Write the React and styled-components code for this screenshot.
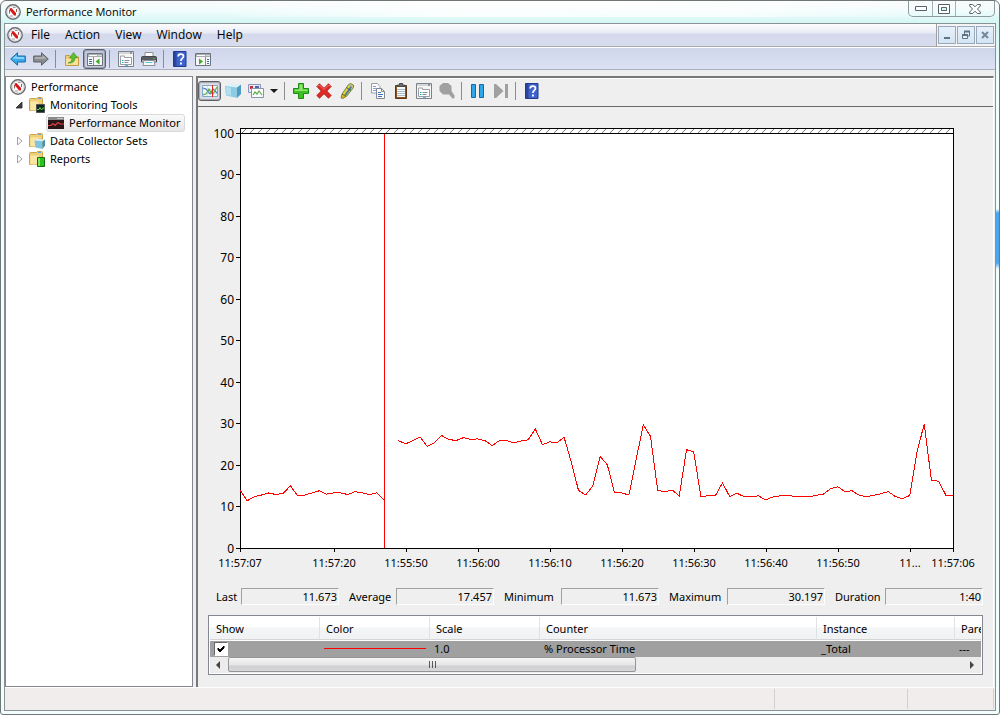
import React from 'react';
import styled, { createGlobalStyle, css } from 'styled-components';

const GlobalStyle = createGlobalStyle`
  * {
    box-sizing: border-box;
  }

  body {
    margin: 0;
    color: #000;
    font: 11px/16px 'Noto Sans', 'Open Sans', sans-serif;
  }

  button, input {
    margin: 0;
    padding: 0;
    border: 0;
    background: none;
    color: inherit;
    font: inherit;
  }
`;

/* Window frame */

const Window = styled.div`
  display: flex;
  flex-flow: column;
  min-height: 100vh;
  padding: 0 3px 3px;
  border: 1px solid #6f7677;
  border-radius: 6px 6px 3px 3px;
  background:
    linear-gradient(to bottom, transparent 208px, #4ba6ee 212px, #4ba6ee 262px, transparent 268px) right top / 3px 100% no-repeat,
    linear-gradient(to right, transparent 20%, rgba(255, 255, 255, 0.8) 45%, rgba(255, 255, 255, 0.6) 75%, transparent 95%) left top / 100% 16px no-repeat,
    linear-gradient(to bottom, #fbfbfb, #f0fcfc 10px, #d3f6f4 22px, #f2fdfd 80px, #f2fdfd);
`;

const TitleBar = styled.header`
  display: flex;
  flex: 0 0 22px;
  align-items: center;
  gap: 5px;
  padding: 0 1px;
`;

const Title = styled.h1`
  margin: 0;
  font-family: 'Open Sans', sans-serif;
  font-size: 11px;
  font-weight: 400;
`;

const FrameButtons = styled.div`
  display: flex;
  align-self: flex-start;
  height: 16px;
  margin-left: auto;
  border: 1px solid #8e9c9f;
  border-top: 0;
  border-radius: 0 0 5px 5px;
`;

const FrameButton = styled.button`
  display: flex;
  align-items: center;
  justify-content: center;
  width: ${({ $wide }) => ($wide ? 39 : 23)}px;

  & + & {
    border-left: 1px solid #a5b3b6;
  }
`;

const Client = styled.div`
  display: flex;
  flex: 1;
  flex-flow: column;
  border: 1px solid #8b9296;
  background: #efefef;
`;

const MenuBar = styled.nav`
  display: flex;
  flex: 0 0 23px;
  align-items: center;
  padding-left: 2px;
  border-bottom: 1px solid #a9abb3;
  background: linear-gradient(to bottom, #fdfdfe, #e8ebf5 9px, #d3d9ec 10px, #d8ddee);
`;

const MenuItem = styled.button`
  padding: 0 7px 0 8px;
  font-family: 'Open Sans', sans-serif;
  font-size: 12px;
`;

const DocumentButtons = styled.div`
  display: flex;
  align-self: stretch;
  align-items: center;
  gap: 1px;
  margin-left: auto;
  padding: 0 1px;
  border-left: 1px solid #a0a0a0;
  background: #f4f4f6;
`;

const DocumentButton = styled.button`
  display: flex;
  align-items: center;
  justify-content: center;
  width: 18px;
  height: 18px;
  border: 1px solid #97a9bb;
  background: linear-gradient(to bottom, #e6f1fb, #d5e4f3);
`;

/* Toolbars */

const Toolbar = styled.div`
  display: flex;
  align-items: center;
`;

const MainToolbar = styled(Toolbar)`
  flex: 0 0 23px;
  padding-left: 1px;
  border-top: 1px solid #fff;
  border-bottom: 1px solid #aab0c0;
  background: linear-gradient(to bottom, #cfd5ea, #dce2f4);
`;

const ChartToolbar = styled(Toolbar)`
  height: 29px;
  padding-bottom: 3px;
  border-top: 1px solid #fff;
  border-bottom: 1px solid #696969;
`;

const ToolButton = styled.button`
  display: flex;
  align-items: center;
  justify-content: center;
  width: ${({ $narrow }) => ($narrow ? 14 : 23)}px;
  height: 20px;

  ${({ $pressed }) =>
    $pressed &&
    css`
      border: 1px solid #5c5f68;
      border-radius: 3px;
      background: rgba(140, 145, 160, 0.18);
      box-shadow: inset 0 0 1px 1px rgba(90, 95, 110, 0.45);
    `}
`;

const Separator = styled.span`
  width: 8px;
  height: 18px;
  background: linear-gradient(#8b8b90, #8b8b90) 3px 0 / 1px 100% no-repeat;
`;

/* Panels */

const Body = styled.main`
  display: grid;
  flex: 1;
  grid-template-columns: 188px minmax(0, 1fr);
  gap: 3px;
  padding: 6px 1px 0 0;
`;

const TreePanel = styled.aside`
  padding-top: 1px;
  border: 1px solid #828790;
  background: #fff;
`;

const TreeList = styled.ul`
  margin: 0;
  padding: 0;
  list-style: none;
`;

const TreeRow = styled.li`
  display: flex;
  align-items: center;
  height: 18px;
  padding-left: ${({ $level }) => [4, 9, 40][$level]}px;
`;

const TreeToggle = styled.button`
  display: flex;
  align-items: center;
  justify-content: center;
  width: 8px;
  height: 16px;
  margin-right: 6px;
`;

const TreeLabel = styled.span`
  display: flex;
  align-items: center;
  gap: 5px;
  height: 18px;
  white-space: nowrap;

  ${({ $selected }) =>
    $selected &&
    css`
      padding: 0 4px 0 1px;
      border: 1px solid #d9d9d9;
      border-radius: 3px;
      background: linear-gradient(to bottom, #fafafa, #e6e6e6);
    `}
`;

const MonitorPanel = styled.section`
  display: flex;
  flex-flow: column;
  border-top: 2px solid #787878;
  border-left: 2px solid #787878;
  border-right: 1px solid #fff;
`;

const ChartDrawing = styled.svg`
  display: block;
  width: 100%;
  height: auto;
`;

const Stats = styled.div`
  display: grid;
  grid-template-columns: 35px 1fr 57px 1fr 67px 1fr 68px 1fr 60px 1fr;
  align-items: center;
  padding: 7px 10px 10px 8px;
`;

const StatLabel = styled.label`
  padding-left: 10px;
`;

const StatValue = styled.input`
  width: 100%;
  min-width: 0;
  height: 17px;
  padding-right: 1px;
  border: 1px solid #fff;
  border-top-color: #a0a0a0;
  border-left-color: #a0a0a0;
  text-align: right;
`;

const Legend = styled.div`
  margin: 0 10px 11px;
  padding: 1px;
  overflow: hidden;
  border: 1px solid #828790;
  background: #fff;
`;

const LegendTable = styled.table`
  width: 100%;
  table-layout: fixed;
  border-collapse: separate;
  border-spacing: 0;
`;

const HeadCell = styled.th`
  width: ${({ $width }) => ($width ? `${$width}px` : 'auto')};
  height: 23px;
  padding: 2px 0 0 6px;
  overflow: hidden;
  border-right: 1px solid #e0e3e6;
  border-bottom: 1px solid #d5d5d5;
  background: linear-gradient(to bottom, #fff 10px, #f4f5f7 11px, #f1f2f4);
  font-weight: 400;
  text-align: left;
  white-space: nowrap;

  &:last-child {
    border-right: 0;
  }
`;

const Cell = styled.td`
  height: 17px;
  padding: 0 4px;
  overflow: hidden;
  border-top: 1px solid #fff;
  background: #a0a0a0;
  white-space: nowrap;
`;

const Swatch = styled.span`
  display: block;
  height: 1px;
  margin-bottom: 1px;
  background: #f00;
`;

const ShowCheck = styled.input`
  display: block;
  width: 14px;
  height: 14px;
  appearance: none;
  border: 1px solid #fff;
  border-top-color: #696969;
  border-left-color: #696969;
  background: #fff;

  &:checked {
    background: #fff url("data:image/svg+xml,%3Csvg xmlns='http://www.w3.org/2000/svg' width='12' height='12'%3E%3Cpath d='M3 5l2 2 4-4v2L5 9 3 7z' fill='%23000' stroke='%23000'/%3E%3C/svg%3E") center no-repeat;
  }
`;

const ScrollBar = styled.div`
  display: flex;
  height: 16px;
  background: #ececec;
`;

const ScrollArrow = styled.button`
  display: flex;
  align-items: center;
  justify-content: center;
  width: 18px;
`;

const ScrollTrack = styled.div`
  flex: 1;
`;

const ScrollThumb = styled.button`
  display: flex;
  align-items: center;
  justify-content: center;
  gap: 2px;
  width: calc(100% * 5 / 9);
  height: 15px;
  border: 1px solid #959595;
  border-radius: 2px;
  background: linear-gradient(to bottom, #f5f5f5, #e6e6e8 7px, #cfcfd2 8px, #d8d8da);
`;

const Grip = styled.span`
  width: 1px;
  height: 7px;
  background: #5a5a5a;
`;

const StatusBar = styled.footer`
  display: flex;
  flex: 0 0 23px;
  justify-content: flex-end;
  padding: 1px 1px 1px 0;
  border-top: 1px solid #fff;
  background: #f1edec;
`;

const StatusCell = styled.div`
  width: ${({ $width }) => $width}px;
  border-left: 1px solid #d4d0cf;

  &:last-child {
    border-right: 1px solid #d4d0cf;
  }
`;

/* Icons */

const IconSvg = styled.svg`
  display: block;
  flex: none;
`;

const Icon = ({ size = 16, children }) => (
  <IconSvg width={size} height={size} viewBox={`0 0 ${size} ${size}`} aria-hidden='true'>
    {children}
  </IconSvg>
);

const GaugeIcon = () => (
  <Icon>
    <circle cx='8' cy='8' r='7.2' fill='#fff' stroke='#6a6c6f' strokeWidth='1.4' />
    <circle cx='8' cy='8' r='5.8' fill='#fdfdfd' stroke='#cfd1d3' strokeWidth='0.8' />
    <path d='M4.500 9.500V6M11.500 8V5' stroke='#9a5a5a' strokeWidth='1' />
    <path d='M4.500 4.500L6.500 4l4.500 5v2.500H9L5 6.500z' fill='#d81818' />
    <path d='M5 12h3M8 3.500h2.500' stroke='#999' strokeWidth='1' />
  </Icon>
);

const BackIcon = () => (
  <Icon>
    <path d='M.7 8L7.5 1.8V5H15.3V11H7.5V14.2z' fill='#3ba9e8' stroke='#1a6aa8' />
    <path d='M2.4 7.8L6.6 4v2H14.2V8z' fill='#8ad4f8' />
  </Icon>
);

const ForwardIcon = () => (
  <Icon>
    <path d='M15.3 8L8.5 1.8V5H.7V11H8.5V14.2z' fill='#8a8d90' stroke='#5e6164' />
    <path d='M13.6 7.8L9.4 4v2H1.8V8z' fill='#aeb0b2' />
  </Icon>
);

const UpFolderIcon = () => (
  <Icon>
    <path d='M1.500 4.500h4l1.500 1.500h7.500v8.500H1.500z' fill='#edcb72' stroke='#c29a43' />
    <path d='M2 8h12v6H2z' fill='#f8e19b' />
    <path d='M4 12c3-.5 4-2.500 4-5H5.500L9.500 1.500l4 5H11c0 4-2.500 6-7 5.500z' fill='#5cc034' stroke='#3a8a20' strokeWidth='.6' />
  </Icon>
);

const PaneIcon = ({ right }) => (
  <Icon>
    <path d='M.5 2.500h15v12H.5z' fill='#f7f7f7' stroke='#70747a' />
    <path d='M1 3h14v3H1z' fill='#a9adb3' />
    <path d='M2 4.500h8M11.500 4.500h1M13.500 4.500h1' stroke='#fff' />
    <path d={right ? 'M10.500 6v8' : 'M6.500 6v8'} stroke='#8a8e94' />
    <path d={right ? 'M12 8.500h2M12 10.500h2M12 12.500h2' : 'M2 8.500h3M2 10.500h3M2 12.500h3'} stroke='#3a6ea8' />
    <path d={right ? 'M4 7.500v6l4-3z' : 'M12.500 7.500v6l-4-3z'} fill='#3faa28' />
  </Icon>
);

const PropertiesIcon = () => (
  <Icon>
    <path d='M.5.5h15v15H.5z' fill='#f6f6f4' stroke='#7e8288' />
    <path d='M1 1h14v2H1z' fill='#d4d7da' />
    <path d='M12 2h2' stroke='#555' />
    <path d='M2.500 6.500V5h4v1.500h7v7h-11z' fill='#fff' stroke='#9a9ea4' />
    <path d='M4 9.500h1.500M4 11.500h1.500' stroke='#26b3d8' />
    <path d='M6.500 9.500h5M6.500 11.500h4' stroke='#8b9096' />
    <path d='M7 14.500h3' stroke='#35cbe8' />
  </Icon>
);

const PrintIcon = () => (
  <Icon>
    <path d='M4 1.500h8V6H4z' fill='#fff' stroke='#8c9094' />
    <path d='M.500 6.500q0-1 1-1h13q1 0 1 1V11H.500z' fill='#595c60' stroke='#45484c' />
    <path d='M1 9h14v2H1z' fill='#a8abaf' />
    <path d='M12.500 7.500h1' stroke='#6fdc4a' />
    <path d='M3 9.500h10l1 5H2z' fill='#f8f8f8' stroke='#8c9094' />
    <path d='M4.500 11.500h7' stroke='#55c4de' />
  </Icon>
);

const HelpIcon = () => (
  <Icon>
    <path d='M1.500.5h12.500v15H1.500z' fill='#3f63cc' stroke='#22398c' />
    <path d='M2 1h2.500v14H2z' fill='#2a479f' />
    <path d='M6.200 5.500c0-3.300 5.300-3 5.300-.3C11.500 7.500 8.900 7.400 8.900 10' fill='none' stroke='#fff' strokeWidth='1.7' />
    <path d='M8 11.500h1.900v1.900H8z' fill='#fff' />
  </Icon>
);

const GraphIcon = () => (
  <Icon>
    <path d='M.5 2.500h15v11H.5z' fill='#f4faff' stroke='#7fa6cc' />
    <path d='M1 6.500h14M1 10.500h14M5.500 3v10' stroke='#d5e4f0' />
    <path d='M1 5l3 1 4 5 3-5 4 4' fill='none' stroke='#4a78c8' strokeWidth='1.200' />
    <path d='M1 12l3-1 3-5 2 4 2 1 4-7' fill='none' stroke='#59b23c' strokeWidth='1.200' />
    <path d='M10.500 2v12' stroke='#e3261b' />
  </Icon>
);

const CubeIcon = () => (
  <Icon>
    <path d='M0 3L4.500 1 16 1.500 12 4.500z' fill='#d9f2fa' />
    <path d='M0 3L12 4.500V15L1 12.500z' fill='#8ccbe2' />
    <path d='M12 4.500L16 1.500V11l-4 4z' fill='#4f9cbf' />
    <path d='M1 4l5 .700v8L1.500 12z' fill='#b3e0ef' />
  </Icon>
);

const ViewTypeIcon = () => (
  <Icon>
    <path d='M.5 1.500h12v8H.5z' fill='#e6ecf6' stroke='#8894b8' />
    <path d='M2 3h3v3H2z' fill='#c3293c' />
    <path d='M7 3h4v2H7z' fill='#5064b0' />
    <path d='M3.500 5.500h12v9h-12z' fill='#fafcff' stroke='#8894a8' />
    <path d='M5 12l2-3 2 2 2-3 3 4' fill='none' stroke='#5cae40' strokeWidth='1.200' />
  </Icon>
);

const DropIcon = () => (
  <Icon size={8}>
    <path d='M0 2h8L4 6z' fill='#1a1a1a' />
  </Icon>
);

const AddIcon = () => (
  <Icon>
    <path d='M5.500.5h5v5h5v5h-5v5h-5v-5h-5v-5h5z' fill='#3fbf24' stroke='#1d8a14' />
    <path d='M6.500 1.500h3v5h5v1.500h-13V6.500h5z' fill='#93e572' />
  </Icon>
);

const DeleteIcon = () => (
  <Icon>
    <path d='M.8 3.500L3.500.8 8 5.200 12.500.8l2.700 2.700L10.800 8l4.400 4.500-2.700 2.700L8 10.800l-4.500 4.400L.8 12.500 5.200 8z' fill='#dd2a26' stroke='#ad1613' strokeWidth='.8' />
    <path d='M2 3.500l1.500-1.500L8 6.500 12.500 2 14 3.500' fill='none' stroke='#f27a72' />
  </Icon>
);

const HighlightIcon = () => (
  <Icon>
    <path d='M9.500 1.500l2-1 3 1.500v2.500l-7 9L3 11z' fill='#e3cf3a' stroke='#5f6a50' strokeWidth='.8' />
    <path d='M12.500 3.500l-6.500 9' stroke='#4a7f9a' strokeWidth='2' />
    <path d='M10 1.500l3.500 2.500' stroke='#8db4c6' strokeWidth='1.500' />
    <path d='M3 11l4 2.500-3 2-2-.5z' fill='#d0b81c' stroke='#6a6318' strokeWidth='.7' />
    <path d='M7.500 4.500l4.500 3' stroke='#42586a' />
  </Icon>
);

const CopyIcon = () => (
  <Icon>
    <path d='M1.500.5h6l2.500 3V10H1.500z' fill='#fff' stroke='#9a9ea4' />
    <path d='M3 3.500h3M3 5.500h4M3 7.500h3' stroke='#7ba1d6' />
    <path d='M6.500 5.500h5l3 3v7h-8z' fill='#fff' stroke='#85898f' />
    <path d='M11.500 5.500v3h3' fill='none' stroke='#85898f' />
    <path d='M8 9.500h3M8 11.500h5M8 13.500h4' stroke='#3b74c4' />
  </Icon>
);

const ClipboardIcon = () => (
  <Icon>
    <path d='M2.500 2.500h11v13h-11z' fill='#8a5423' stroke='#60380f' />
    <path d='M4 4h8v10H4z' fill='#f6fafd' />
    <path d='M4 6.500h8M4 8.500h8M4 10.500h8M4 12.500h8' stroke='#a9bccc' />
    <path d='M4.500 3.500V2h2V.5h3V2h2v1.500z' fill='#6e7276' stroke='#44484c' />
  </Icon>
);

const ZoomIcon = () => (
  <Icon>
    <path d='M4 0h5l3.500 3v5L15.500 12.500v2L14 16l-4-4.500H4L.5 8V3z' fill='#a0a0a0' />
  </Icon>
);

const PauseIcon = () => (
  <Icon>
    <path d='M1.500 1.500h4v13h-4zM9.500 1.500h4v13h-4z' fill='#2fa5ea' stroke='#1469ac' />
  </Icon>
);

const StepIcon = () => (
  <Icon>
    <path d='M1 1h2l7.500 7L3 15H1zM12 1h3v14h-3z' fill='#a0a0a0' />
  </Icon>
);

const FolderIcon = ({ badge }) => (
  <Icon>
    <path d='M.5 2.500q0-1 1-1h6l1-1h4q1 0 1 1v12H.5z' fill='#efcf78' stroke='#cfa447' />
    <path d='M1.500 4.500h8v9h-8z' fill='#fbe6a4' />
    <path d='M9 1.500h3' stroke='#6aa7de' />
    {badge === 'tools' && (
      <>
        <path d='M7.500 7.500h8v8h-8z' fill='#12281c' stroke='#555' />
        <path d='M8 12.500h2l1-2 1.500 2.500 1.500-2h1.500' fill='none' stroke='#5bd24d' />
      </>
    )}
    {badge === 'sets' && (
      <>
        <path d='M5.500 7.500l3-1.500 7.500.500-2.500 2z' fill='#d2eef8' />
        <path d='M5.500 7.500l8 1v7.500l-7-1.500z' fill='#7fc3de' />
        <path d='M13.500 8.500L16 6.500v6L13.500 16z' fill='#478fb3' />
      </>
    )}
    {badge === 'reports' && (
      <>
        <path d='M8.500 6.500h7v9h-7z' fill='#2fc01f' stroke='#136b0d' />
        <path d='M9 7h2v8H9z' fill='#7ce860' />
      </>
    )}
  </Icon>
);

const MonitorIcon = () => (
  <Icon>
    <path d='M0 2h16v12H0z' fill='#8b8b8b' />
    <path d='M0 5h16v9H0z' fill='#2a1618' />
    <path d='M9.500 3.500h1M11.500 3.500h1M13.500 3.500h1' stroke='#fff' />
    <path d='M0 10.500h3l2-2 2 2 3-3 2 1.500h4' fill='none' stroke='#e04040' strokeWidth='1.200' />
  </Icon>
);

const ExpanderIcon = ({ open }) => (
  <Icon size={8}>
    {open ? (
      <path d='M7 1v6H1z' fill='#404040' stroke='#262626' strokeWidth='.8' />
    ) : (
      <path d='M2.500 0v8l4.500-4z' fill='#fff' stroke='#a0a0a0' />
    )}
  </Icon>
);

const ArrowIcon = ({ right }) => (
  <Icon size={8}>
    <path d={right ? 'M2 0v8l4-4z' : 'M5 0v8L1 4z'} fill='#444' />
  </Icon>
);

/* Chart data, % processor time per sample; null marks the sweep position */

const SAMPLES = [
  14.1, 11.5, 12.5, 12.9, 13.4, 13, 13.3, 15.1, 12.7, 12.9,
  13.4, 13.9, 13.1, 13.4, 13.4, 13, 13.7, 13.4, 13, 13.4,
  11.7, null, 26, 25.2, 26, 26.9, 24.6, 25.5, 27.2, 26.3,
  26, 26.7, 26.3, 26.4, 26, 24.8, 26, 26, 25.5, 25.9,
  26.2, 28.8, 25, 25.7, 25.5, 26.8, 20.8, 14, 12.9, 15.1,
  22.2, 20.2, 13.4, 13.4, 12.9, 21.4, 29.8, 27, 14, 13.7,
  14.1, 12.7, 23.8, 23.3, 12.5, 12.7, 12.7, 15.8, 12.5, 13.3,
  12.5, 12.5, 12.7, 11.7, 12.4, 12.7, 12.9, 12.5, 12.5, 12.5,
  12.8, 13.1, 14.4, 14.9, 13.7, 13.9, 12.8, 12.5, 12.8, 13.2,
  13.7, 12.5, 12, 12.8, 23.2, 30, 16.5, 16.2, 12.9, 12.9
];

const TIMES = [
  [0, '11:57:07'],
  [94, '11:57:20'],
  [166, '11:55:50'],
  [238, '11:56:00'],
  [310, '11:56:10'],
  [382, '11:56:20'],
  [454, '11:56:30'],
  [526, '11:56:40'],
  [598, '11:56:50'],
  [670, '11...'],
  [713, '11:57:06']
];

const PLOT_WIDTH = 713;
const PLOT_HEIGHT = 415;

const sampleX = (i) => (i * PLOT_WIDTH) / (SAMPLES.length - 1);
const sampleY = (v) => PLOT_HEIGHT * (1 - v / 100) + 0.5;

const linePath = SAMPLES.map((v, i) => {
  if (v === null) return '';
  const command = i === 0 || SAMPLES[i - 1] === null ? 'M' : 'L';
  return `${command}${sampleX(i).toFixed(1)} ${sampleY(v).toFixed(1)}`;
}).join('');

const Chart = () => (
  <ChartDrawing viewBox='-42 -26 795 474' role='img' aria-label='% Processor Time'>
    <defs>
      <pattern id='hatch' width='8' height='4' patternUnits='userSpaceOnUse' y='-4'>
        <path d='M2 4l4-4' stroke='#555' strokeWidth='.8' />
      </pattern>
    </defs>
    <g shapeRendering='crispEdges' fill='none' stroke='#000'>
      <path d='M.5-4.500h713v420H.5z' fill='#fff' />
      <path d='M1-4h712v4H1z' fill='url(#hatch)' stroke='none' />
      <path d='M0 .5h714' />
      {[...Array(11).keys()].map((n) => (
        <path key={n} d={`M-4 ${Math.floor(n * 41.5) + 0.5}h4`} />
      ))}
      {TIMES.map(([x]) => (
        <path key={x} d={`M${x + 0.5} 416v3`} />
      ))}
      <path d='M144.500 1v414' stroke='#f00' />
      <path d={linePath} stroke='#f00' />
    </g>
    {[...Array(11).keys()].map((n) => (
      <text key={n} x='-6' y={Math.floor(n * 41.5) + 5} textAnchor='end' fontSize='12'>
        {100 - n * 10}
      </text>
    ))}
    {TIMES.map(([x, label]) => (
      <text key={x} x={x} y='434' textAnchor='middle'>
        {label}
      </text>
    ))}
  </ChartDrawing>
);

const STATS = [
  ['Last', '11.673'],
  ['Average', '17.457'],
  ['Minimum', '11.673'],
  ['Maximum', '30.197'],
  ['Duration', '1:40']
];

const Tool = ({ label, children, ...rest }) => (
  <ToolButton type='button' aria-label={label} {...rest}>
    {children}
  </ToolButton>
);

export default function App () {
  return (
    <>
      <GlobalStyle />
      <Window>
        <TitleBar>
          <GaugeIcon />
          <Title>Performance Monitor</Title>
          <FrameButtons>
            <FrameButton type='button' aria-label='Minimize'>
              <IconSvg width='12' height='5' viewBox='0 0 12 5'>
                <path d='M.5.5h11v4H.5z' fill='#fff' stroke='#5a6068' />
              </IconSvg>
            </FrameButton>
            <FrameButton type='button' aria-label='Maximize'>
              <IconSvg width='12' height='10' viewBox='0 0 12 10'>
                <path d='M.5.5h11v9H.5z' fill='#fff' stroke='#5a6068' />
                <path d='M3.500 3.500h5v3h-5z' fill='#cfe' stroke='#5a6068' />
              </IconSvg>
            </FrameButton>
            <FrameButton type='button' aria-label='Close' $wide>
              <IconSvg width='12' height='10' viewBox='0 0 12 10'>
                <path d='M.7.5h3L6 2.800 8.300.5h3v1.500L8.500 5l2.800 3v1.500h-3L6 7.200 3.700 9.500h-3V8L3.500 5 .7 2z' fill='#fff' stroke='#5a6068' />
              </IconSvg>
            </FrameButton>
          </FrameButtons>
        </TitleBar>
        <Client>
          <MenuBar>
            <GaugeIcon />
            {['File', 'Action', 'View', 'Window', 'Help'].map((item) => (
              <MenuItem type='button' key={item}>{item}</MenuItem>
            ))}
            <DocumentButtons>
              <DocumentButton type='button' aria-label='Minimize document'>
                <Icon size={10}>
                  <path d='M2 7h6v2H2z' fill='#5f7386' />
                </Icon>
              </DocumentButton>
              <DocumentButton type='button' aria-label='Restore document'>
                <Icon size={10}>
                  <path d='M3.500 4V1.500h5V6H7' fill='none' stroke='#5f7386' />
                  <path d='M3 1.500h6' stroke='#5f7386' strokeWidth='2' />
                  <path d='M1.500 4.500h5v4h-5z' fill='#e6f1fb' stroke='#5f7386' />
                  <path d='M1 5h6' stroke='#5f7386' strokeWidth='2' />
                </Icon>
              </DocumentButton>
              <DocumentButton type='button' aria-label='Close document'>
                <Icon size={10}>
                  <path d='M2 2l6 6M8 2L2 8' stroke='#74889b' strokeWidth='2' />
                </Icon>
              </DocumentButton>
            </DocumentButtons>
          </MenuBar>
          <MainToolbar>
            <Tool label='Back'><BackIcon /></Tool>
            <Tool label='Forward'><ForwardIcon /></Tool>
            <Separator />
            <Tool label='Up one level'><UpFolderIcon /></Tool>
            <Tool label='Show/Hide console tree' $pressed><PaneIcon /></Tool>
            <Separator />
            <Tool label='Properties'><PropertiesIcon /></Tool>
            <Tool label='Print'><PrintIcon /></Tool>
            <Separator />
            <Tool label='Help'><HelpIcon /></Tool>
            <Tool label='Show/Hide action pane'><PaneIcon right /></Tool>
          </MainToolbar>
          <Body>
            <TreePanel>
              <TreeList>
                <TreeRow $level={0}>
                  <TreeLabel><GaugeIcon />Performance</TreeLabel>
                </TreeRow>
                <TreeRow $level={1}>
                  <TreeToggle type='button' aria-label='Collapse'><ExpanderIcon open /></TreeToggle>
                  <TreeLabel><FolderIcon badge='tools' />Monitoring Tools</TreeLabel>
                </TreeRow>
                <TreeRow $level={2}>
                  <TreeLabel $selected><MonitorIcon />Performance Monitor</TreeLabel>
                </TreeRow>
                <TreeRow $level={1}>
                  <TreeToggle type='button' aria-label='Expand'><ExpanderIcon /></TreeToggle>
                  <TreeLabel><FolderIcon badge='sets' />Data Collector Sets</TreeLabel>
                </TreeRow>
                <TreeRow $level={1}>
                  <TreeToggle type='button' aria-label='Expand'><ExpanderIcon /></TreeToggle>
                  <TreeLabel><FolderIcon badge='reports' />Reports</TreeLabel>
                </TreeRow>
              </TreeList>
            </TreePanel>
            <MonitorPanel>
              <ChartToolbar>
                <Tool label='View current activity' $pressed><GraphIcon /></Tool>
                <Tool label='View log data'><CubeIcon /></Tool>
                <Tool label='Change graph type'><ViewTypeIcon /></Tool>
                <Tool label='Graph types' $narrow><DropIcon /></Tool>
                <Separator />
                <Tool label='Add'><AddIcon /></Tool>
                <Tool label='Delete'><DeleteIcon /></Tool>
                <Tool label='Highlight'><HighlightIcon /></Tool>
                <Separator />
                <Tool label='Copy properties'><CopyIcon /></Tool>
                <Tool label='Paste counter list'><ClipboardIcon /></Tool>
                <Tool label='Properties'><PropertiesIcon /></Tool>
                <Tool label='Zoom'><ZoomIcon /></Tool>
                <Separator />
                <Tool label='Freeze display'><PauseIcon /></Tool>
                <Tool label='Update data'><StepIcon /></Tool>
                <Separator />
                <Tool label='Help'><HelpIcon /></Tool>
              </ChartToolbar>
              <Chart />
              <Stats>
                {STATS.map(([name, value]) => (
                  <React.Fragment key={name}>
                    <StatLabel htmlFor={`stat-${name}`}>{name}</StatLabel>
                    <StatValue id={`stat-${name}`} value={value} readOnly />
                  </React.Fragment>
                ))}
              </Stats>
              <Legend>
                <LegendTable>
                  <thead>
                    <tr>
                      <HeadCell $width={110}>Show</HeadCell>
                      <HeadCell $width={110}>Color</HeadCell>
                      <HeadCell $width={110}>Scale</HeadCell>
                      <HeadCell $width={277}>Counter</HeadCell>
                      <HeadCell $width={138}>Instance</HeadCell>
                      <HeadCell>Parent</HeadCell>
                    </tr>
                  </thead>
                  <tbody>
                    <tr>
                      <Cell><ShowCheck type='checkbox' aria-label='Show % Processor Time' defaultChecked /></Cell>
                      <Cell><Swatch /></Cell>
                      <Cell>1.0</Cell>
                      <Cell>% Processor Time</Cell>
                      <Cell>_Total</Cell>
                      <Cell>---</Cell>
                    </tr>
                  </tbody>
                </LegendTable>
                <ScrollBar>
                  <ScrollArrow type='button' aria-label='Scroll left'><ArrowIcon /></ScrollArrow>
                  <ScrollTrack>
                    <ScrollThumb type='button' aria-label='Scroll'>
                      <Grip />
                      <Grip />
                      <Grip />
                    </ScrollThumb>
                  </ScrollTrack>
                  <ScrollArrow type='button' aria-label='Scroll right'><ArrowIcon right /></ScrollArrow>
                </ScrollBar>
              </Legend>
            </MonitorPanel>
          </Body>
          <StatusBar>
            <StatusCell $width={133} />
            <StatusCell $width={87} />
          </StatusBar>
        </Client>
      </Window>
    </>
  );
}
